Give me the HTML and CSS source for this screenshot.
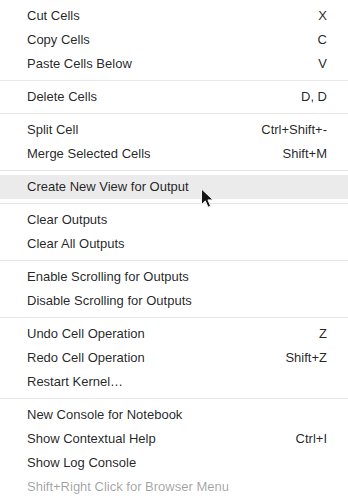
FILE: index.html
```html
<!DOCTYPE html>
<html>
<head>
<meta charset="utf-8">
<link rel="stylesheet" href="styles.css">
</head>
<body>
<ul class="menu">
  <li class="item"><span class="label">Cut Cells</span><span class="shortcut">X</span></li>
  <li class="item"><span class="label">Copy Cells</span><span class="shortcut">C</span></li>
  <li class="item"><span class="label">Paste Cells Below</span><span class="shortcut">V</span></li>
  <li class="sep"></li>
  <li class="item"><span class="label">Delete Cells</span><span class="shortcut">D, D</span></li>
  <li class="sep"></li>
  <li class="item"><span class="label">Split Cell</span><span class="shortcut">Ctrl+Shift+-</span></li>
  <li class="item"><span class="label">Merge Selected Cells</span><span class="shortcut">Shift+M</span></li>
  <li class="sep"></li>
  <li class="item active"><span class="label">Create New View for Output</span><span class="shortcut"></span>
    <svg class="cursor" width="15" height="21" viewBox="0 0 15 21"><path d="M1.5 1 L1.5 16.5 L5.3 12.9 L8.1 19.2 L10.6 18.1 L7.9 11.9 L13 11.9 Z" fill="#151515" stroke="#f4f4f4" stroke-width="1" stroke-linejoin="round"/></svg>
  </li>
  <li class="sep"></li>
  <li class="item"><span class="label">Clear Outputs</span><span class="shortcut"></span></li>
  <li class="item"><span class="label">Clear All Outputs</span><span class="shortcut"></span></li>
  <li class="sep"></li>
  <li class="item"><span class="label">Enable Scrolling for Outputs</span><span class="shortcut"></span></li>
  <li class="item"><span class="label">Disable Scrolling for Outputs</span><span class="shortcut"></span></li>
  <li class="sep"></li>
  <li class="item"><span class="label">Undo Cell Operation</span><span class="shortcut">Z</span></li>
  <li class="item"><span class="label">Redo Cell Operation</span><span class="shortcut">Shift+Z</span></li>
  <li class="item"><span class="label">Restart Kernel…</span><span class="shortcut"></span></li>
  <li class="sep"></li>
  <li class="item"><span class="label">New Console for Notebook</span><span class="shortcut"></span></li>
  <li class="item"><span class="label">Show Contextual Help</span><span class="shortcut">Ctrl+I</span></li>
  <li class="item"><span class="label">Show Log Console</span><span class="shortcut"></span></li>
  <li class="item disabled"><span class="label">Shift+Right Click for Browser Menu</span><span class="shortcut"></span></li>
</ul>
</body>
</html>
```

FILE: styles.css
```css
html, body {
  margin: 0;
  padding: 0;
  background: #ffffff;
  overflow: hidden;
}
.menu {
  list-style: none;
  margin: 0;
  padding: 4px 0;
  font-family: "Liberation Sans", Arial, sans-serif;
  font-size: 13px;
  color: rgba(0, 0, 0, 0.87);
}
.item {
  position: relative;
  display: flex;
  align-items: center;
  justify-content: space-between;
  height: 24px;
  padding: 0 21px 0 27px;
  line-height: 24px;
}
.item.active {
  background: #ebebeb;
}
.item.disabled {
  color: rgba(0, 0, 0, 0.38);
}
.shortcut {
  text-align: right;
}
.sep {
  height: 0;
  border-top: 1px solid #e6e6e6;
  margin: 4px 0;
}
.cursor {
  position: absolute;
  left: 200px;
  top: 13px;
}
```
